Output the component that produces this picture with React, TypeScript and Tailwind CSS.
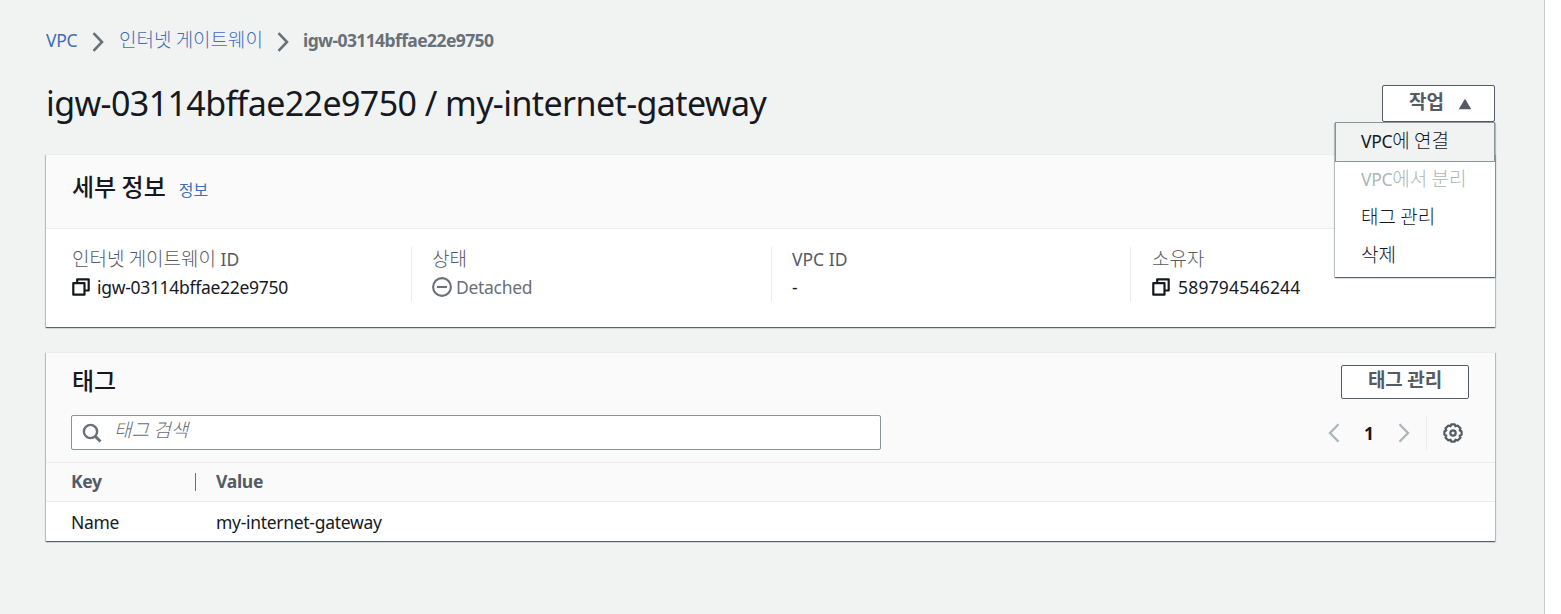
import type { ReactNode } from "react";

function Ko({ children, className = "text-[19px] font-light" }: { children: ReactNode; className?: string }) {
  return <span className={`font-['Noto_Sans_CJK_KR',sans-serif] leading-none tracking-normal ${className}`}>{children}</span>;
}

function Chevron({ className, flip = false, width = 2.6 }: { className: string; flip?: boolean; width?: number }) {
  return (
    <svg viewBox="0 0 12 20" className={`h-5 w-3 shrink-0 ${className}`} fill="none" stroke="currentColor" strokeWidth={width}>
      <path d={flip ? "M10.5 1.2 2 10l8.500 8.800" : "M1.500 1.200 10 10l-8.500 8.800"} />
    </svg>
  );
}

function CopyIcon() {
  return (
    <svg viewBox="0 0 18 18" className="size-[18px] shrink-0" fill="none" stroke="#16191f" strokeWidth="2.2" strokeLinejoin="round">
      <path d="M1.300 5.200h11.200v11.500H1.300z" />
      <path d="M5.200 5V1.300h11.500v11.200h-4" />
    </svg>
  );
}

function MinusCircle() {
  return (
    <svg viewBox="0 0 20 20" className="size-5 shrink-0" fill="none" stroke="#687078" strokeWidth="2.100">
      <circle cx="10" cy="10" r="8.900" />
      <path d="M5 10h10" />
    </svg>
  );
}

function SearchIcon() {
  return (
    <svg viewBox="0 0 20 20" className="size-5 shrink-0" fill="none" stroke="#687078" strokeWidth="2.400">
      <circle cx="8.500" cy="8.500" r="6.600" />
      <path d="m13.200 13.200 5.300 5.300" strokeWidth="2.900" />
    </svg>
  );
}

function GearIcon() {
  return (
    <svg viewBox="0 0 20 20" className="size-5 shrink-0" fill="none" stroke="#545b64" strokeWidth="2.200" strokeLinejoin="round">
      <path d="M8.300 1.400h3.400l.8 1.900 2.100-.8 2.900 2.900-.8 2.100 1.900.8v3.400l-1.900.8.8 2.100-2.900 2.900-2.100-.8-.8 1.900H8.300l-.8-1.900-2.100.8-2.900-2.900.8-2.100-1.900-.8V8.300l1.900-.8-.8-2.100 2.900-2.900 2.100.8z" />
      <circle cx="10" cy="10" r="2.700" />
    </svg>
  );
}

const cardClass =
  "border-t border-[#eaeded] bg-white shadow-[0_1px_1px_0_rgba(0,28,36,0.5),1px_1px_1px_0_rgba(0,28,36,0.18),-1px_1px_1px_0_rgba(0,28,36,0.18)]";

function Field({ label, children, className }: { label: ReactNode; children: ReactNode; className: string }) {
  return (
    <div className={`h-[55px] ${className}`}>
      <div className="h-7 text-[#545b64] leading-6">{label}</div>
      <div className="flex h-6 items-center leading-6">{children}</div>
    </div>
  );
}

function Header() {
  return (
    <>
      <nav className="flex h-6 items-center leading-6">
        <span className="w-[46px] text-[#3f6fb5] tracking-[-0.3px]">VPC</span>
        <Chevron className="mt-1 text-[#687078]" />
        <span className="ml-[15px] w-[158px] text-[#3f6fb5]">
          <Ko>인터넷 게이트웨이</Ko>
        </span>
        <Chevron className="mt-1 text-[#687078]" />
        <span className="ml-[14px] font-bold tracking-[-0.6px] text-[#687078]">igw-03114bffae22e9750</span>
      </nav>
      <div className="mt-[29px] flex h-[73px] justify-between">
        <h1 className="text-[34px] leading-[44px] tracking-[-0.6px]">igw-03114bffae22e9750 / my-internet-gateway</h1>
        <div className="relative mt-1 h-[37px]">
          <button className="flex h-[37px] w-[113px] items-center rounded-[2px] border border-[#545b64] bg-white pl-[26px] text-[#545b64]">
            <span className="-mt-1 leading-6">
              <Ko className="text-[19px] font-bold">작업</Ko>
            </span>
            <svg viewBox="0 0 14 12" className="ml-[14px] h-3 w-[14px] fill-[#545b64]">
              <path d="M7 .8 13.300 11.300H.7z" />
            </svg>
          </button>
          <ul className="absolute right-0 top-[37px] z-10 h-[155px] w-[160px] bg-white leading-6 shadow-[0_1px_1px_0_rgba(0,28,36,0.5),1px_1px_1px_0_rgba(0,28,36,0.2),-1px_1px_1px_0_rgba(0,28,36,0.2)]">
            <li className="h-10 border border-[#879596] bg-[#f1f3f3] pl-[25px] pt-[6px]">
              <span className="tracking-[-0.3px]">VPC</span>
              <Ko>에 연결</Ko>
            </li>
            <li className="h-[38px] pl-[26px] pt-[5px] text-[#aab7b8]">
              <span className="tracking-[-0.3px]">VPC</span>
              <Ko>에서 분리</Ko>
            </li>
            <li className="h-[38px] pl-[26px] pt-[5px]">
              <Ko>태그 관리</Ko>
            </li>
            <li className="h-[38px] pl-[26px] pt-[5px]">
              <Ko>삭제</Ko>
            </li>
          </ul>
        </div>
      </div>
    </>
  );
}

function Details() {
  return (
    <section className={`h-[173px] ${cardClass}`}>
      <header className="flex h-[74px] items-baseline border-b border-[#eaeded] bg-[#fafafa] pl-[26px] pt-[18px] leading-8">
        <h2>
          <Ko className="text-[24px] font-medium">세부 정보</Ko>
        </h2>
        <a className="ml-[13px] text-[#3f6fb5]">
          <Ko className="text-[16px] font-normal">정보</Ko>
        </a>
      </header>
      <div className="flex pl-[26px] pt-[18px]">
        <Field className="w-[339px]" label={<><Ko>인터넷 게이트웨이</Ko> ID</>}>
          <CopyIcon />
          <span className="ml-[7px] tracking-[-0.3px]">igw-03114bffae22e9750</span>
        </Field>
        <Field className="w-[360px] border-l border-[#eaeded] pl-5" label={<Ko>상태</Ko>}>
          <MinusCircle />
          <span className="ml-1 tracking-[-0.3px] text-[#687078]">Detached</span>
        </Field>
        <Field className="w-[359px] border-l border-[#eaeded] pl-5" label="VPC ID">
          -
        </Field>
        <Field className="border-l border-[#eaeded] pl-[21px]" label={<Ko>소유자</Ko>}>
          <CopyIcon />
          <span className="ml-2 tracking-[0.2px]">589794546244</span>
        </Field>
      </div>
    </section>
  );
}

function Tags() {
  return (
    <section className={`mt-[25px] h-[189px] ${cardClass}`}>
      <div className="h-[110px] border-b border-[#eaeded] bg-[#fafafa] pl-[25px] pr-[26px] pt-3">
        <div className="flex h-[50px] justify-between">
          <h2 className="ml-px pt-[2px] leading-8">
            <Ko className="text-[24px] font-medium">태그</Ko>
          </h2>
          <button className="h-[34px] w-32 rounded-[2px] border border-[#545b64] bg-white pb-1 leading-6 text-[#545b64]">
            <Ko className="text-[19px] font-bold">태그 관리</Ko>
          </button>
        </div>
        <div className="flex h-[35px] items-center">
          <div className="flex h-[35px] w-[810px] items-center rounded-[2px] border border-[#879596] bg-white pl-[10px]">
            <SearchIcon />
            <span className="-mt-[5px] ml-3 italic leading-6 text-[#687078]">
              <Ko>태그 검색</Ko>
            </span>
          </div>
          <div className="ml-auto flex h-[34px] items-center">
            <Chevron flip className="text-[#aab7b8]" width={2.3} />
            <span className="w-[58px] text-center font-bold leading-6">1</span>
            <Chevron className="text-[#aab7b8]" width={2.3} />
            <div className="ml-4 flex h-[34px] w-[43px] items-center border-l border-[#eaeded] pl-4">
              <GearIcon />
            </div>
          </div>
        </div>
      </div>
      <div className="flex h-[39px] items-center border-b border-[#eaeded] bg-[#fafafa] pl-[25px] font-bold leading-6 tracking-[-0.3px] text-[#545b64]">
        <span className="-mt-[2px] w-[124px]">Key</span>
        <span className="h-[18px] w-px bg-[#687078]" />
        <span className="-mt-[2px] ml-5">Value</span>
      </div>
      <div className="flex h-[39px] items-center pl-[25px] leading-6 tracking-[-0.3px]">
        <span className="w-[145px]">Name</span>
        <span>my-internet-gateway</span>
      </div>
    </section>
  );
}

export default function App() {
  return (
    <div className="h-[614px] w-[1561px] overflow-hidden bg-white font-['Noto_Sans','Noto_Sans_CJK_KR',sans-serif] text-[17.5px] text-[#16191f]">
      <main className="h-[614px] w-[1545px] whitespace-nowrap border-r border-[#c5cbcc] bg-[#f1f3f3] pl-[46px] pr-[49px] pt-7">
        <Header />
        <Details />
        <Tags />
      </main>
    </div>
  );
}
